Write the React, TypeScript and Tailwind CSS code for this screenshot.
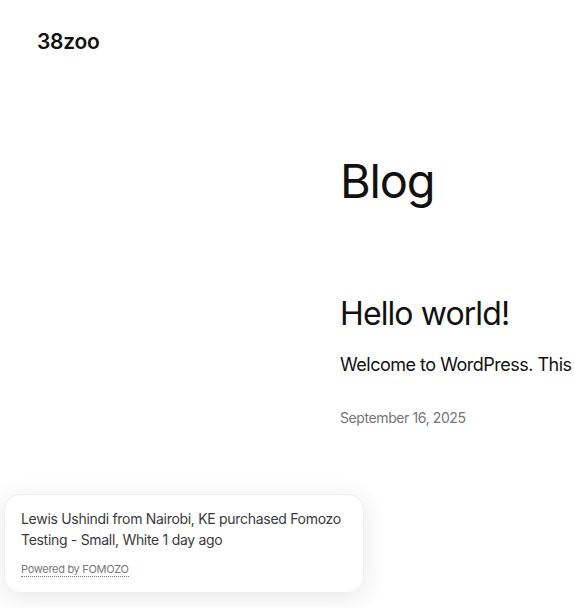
const App = () => {
  return (
    <div
      className="relative h-[608px] w-[574px] overflow-hidden bg-white text-[#111]"
      style={{ fontFamily: "Inter, 'Noto Sans', sans-serif" }}
    >
      <header className="pl-[37px] pt-[26px]">
        <span className="text-[21px] font-semibold tracking-[-0.3px] text-[#111]">38zoo</span>
      </header>

      <main className="ml-[340px] mt-[99px] whitespace-nowrap">
        <h1 className="text-[47px] font-normal leading-none tracking-[-1.2px]">Blog</h1>
        <h2 className="mt-[94px] text-[32px] font-normal leading-none tracking-[-0.9px]">Hello world!</h2>
        <p className="mt-[26px] text-[18px] leading-none tracking-[-0.5px]">
          Welcome to WordPress. This is your first post. Edit or delete it, then start writing!
        </p>
        <p className="mt-[37px] text-[14px] leading-none tracking-[-0.4px] text-[#767676]">
          September 16, 2025
        </p>
      </main>

      <div className="absolute left-[4px] top-[494px] w-[360px] rounded-[16px] border border-[#efefef] bg-white px-[16px] pb-[13px] pt-[13px] shadow-[0_4px_24px_rgba(0,0,0,0.1)]">
        <p className="text-[14px] leading-[21px] tracking-[-0.3px] text-[#3a3a3a]">
          Lewis Ushindi from Nairobi, KE purchased Fomozo Testing - Small, White 1 day ago
        </p>
        <a className="mt-[13px] inline-block border-b border-dotted border-[#777] text-[11px] leading-[13px] tracking-[-0.3px] text-[#777]">
          Powered by FOMOZO
        </a>
      </div>
    </div>
  );
};

export default App;
